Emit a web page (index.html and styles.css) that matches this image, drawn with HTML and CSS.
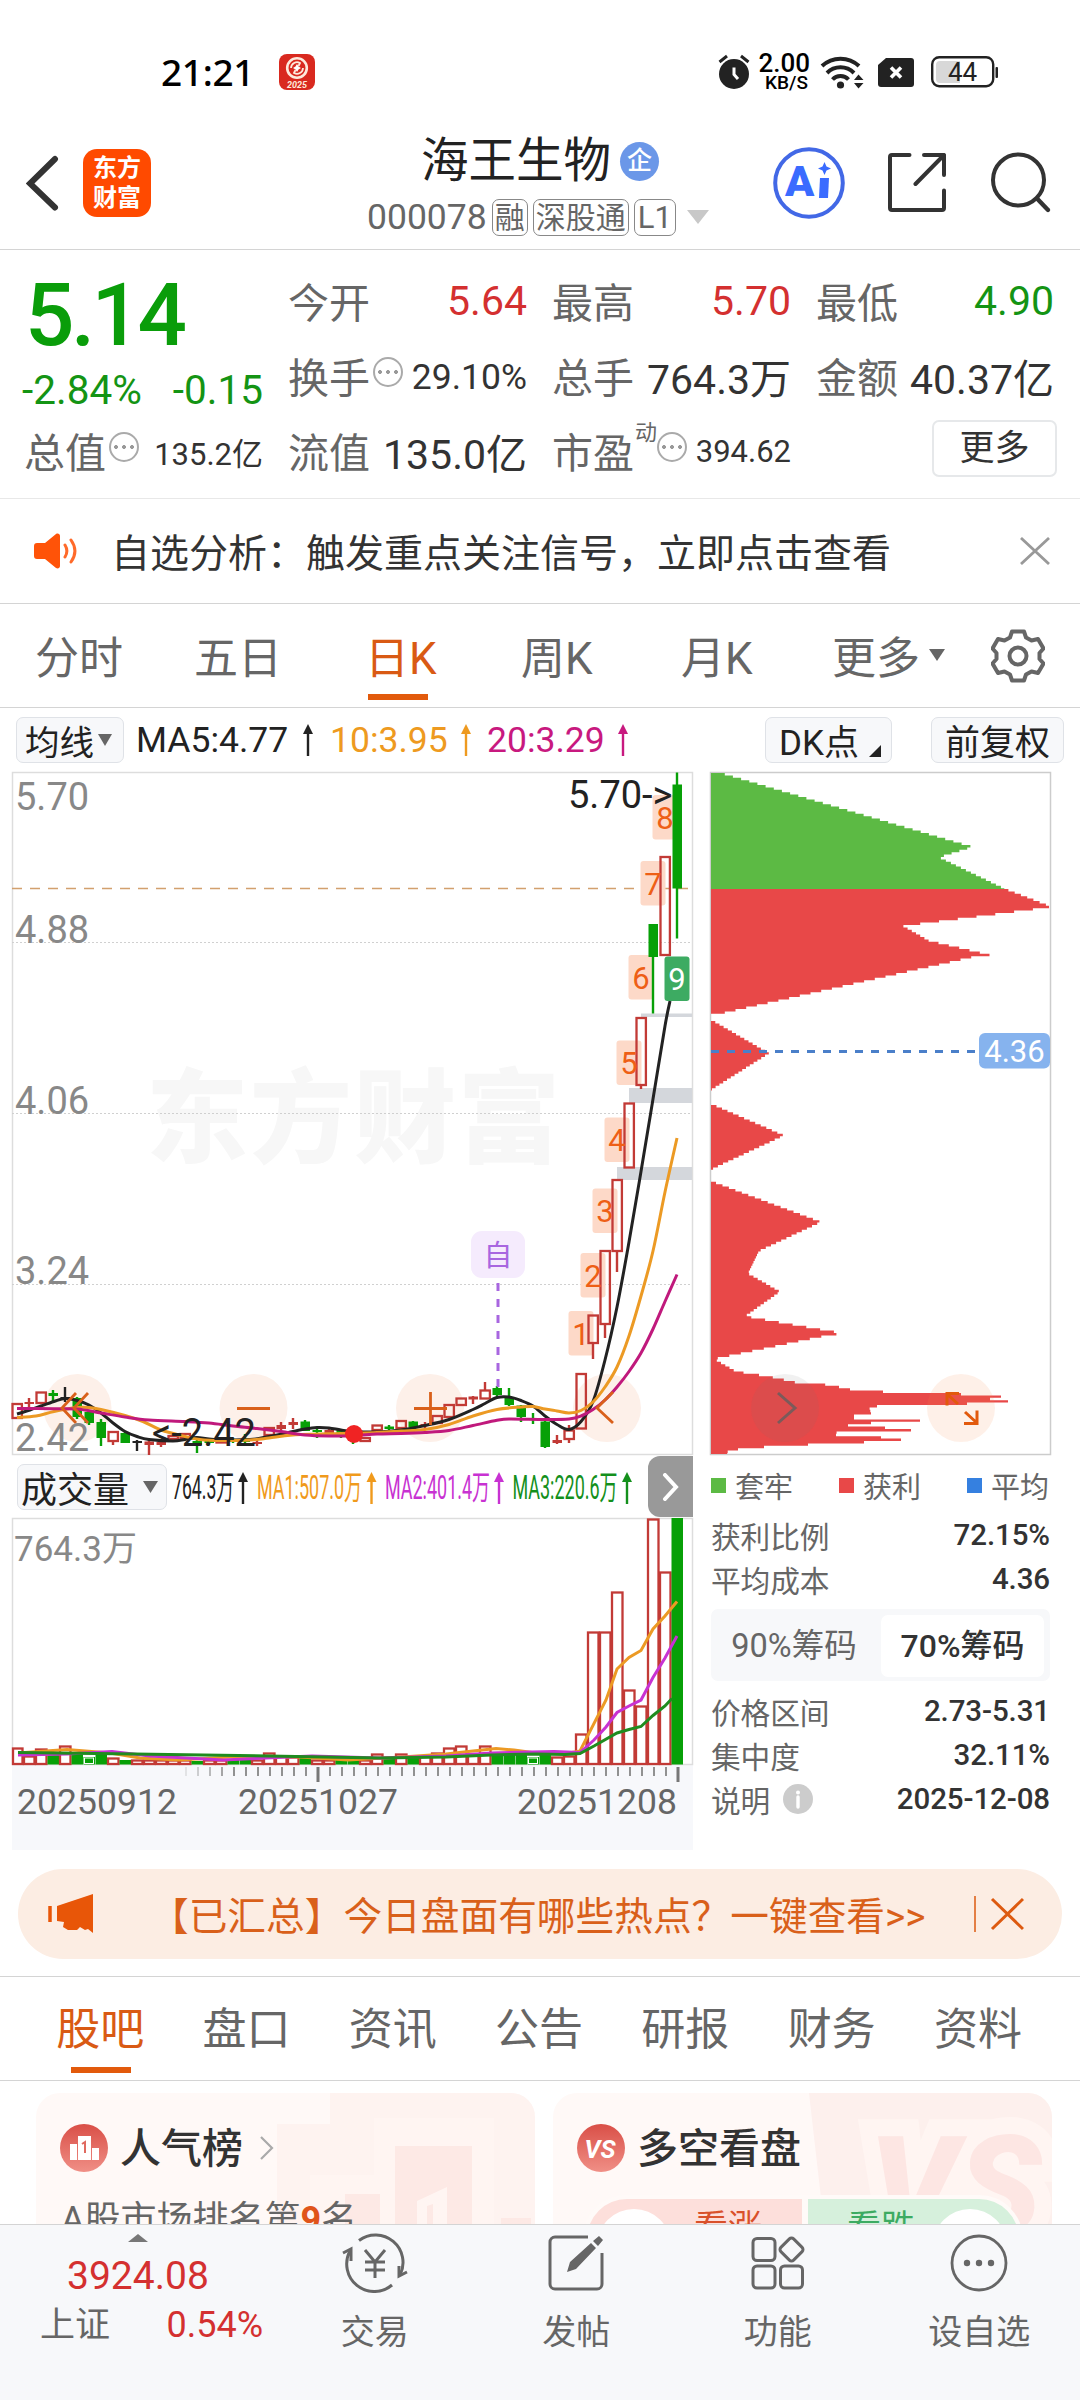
FILE: index.html
```html
<!DOCTYPE html>
<html lang="zh-CN">
<head>
<meta charset="utf-8">
<title>海王生物 000078</title>
<link rel="stylesheet" href="styles.css">
</head>
<body>
<div class="screen">
  <div class="status">
    <span class="clock">21:21</span>
    <svg class="app-dot" width="36" height="36" viewBox="0 0 36 36"><rect width="36" height="36" rx="8" fill="#d9291f"/><circle cx="18" cy="14" r="9.800" fill="none" stroke="#fde9dc" stroke-width="2.600"/><path d="M12 14a6 6 0 0 1 9-5l-1.500 3M24 14a6 6 0 0 1-9 5l1.500-3" fill="none" stroke="#fde9dc" stroke-width="1.800"/><path d="M18 10l1.500 2.500 2.500 1.500-2.500 1.500L18 18l-1.500-2.500L14 14l2.500-1.500z" fill="#fff"/><text x="18" y="34" class="dot-text">2025</text></svg>
    <svg class="alarm" width="32" height="36" viewBox="0 0 32 36"><circle cx="16" cy="20" r="15" fill="#222"/><path d="M1.500 8L9 2M30.500 8L23 2" stroke="#222" stroke-width="3"/><path d="M16 13.500v7l4 4.500" fill="none" stroke="#fff" stroke-width="3"/></svg>
    <span class="speed"><b>2.00</b><i>KB/S</i></span>
    <svg class="wifi" width="44" height="34" viewBox="0 0 44 34"><g fill="none" stroke="#222" stroke-width="4"><path d="M2 11a27 27 0 0 1 37 0"/><path d="M7 18a19 19 0 0 1 27 0"/><path d="M12.500 24.500a11 11 0 0 1 16 0"/></g><circle cx="20.500" cy="30" r="3.600" fill="#222"/><path d="M34 25l4.500-5.500 5 5.500zM34 28l4.500 5.500 5-5.500z" fill="#222"/></svg>
    <svg class="sim" width="36" height="29" viewBox="0 0 36 29"><path d="M8 0h25a3 3 0 0 1 3 3v23a3 3 0 0 1-3 3H3a3 3 0 0 1-3-3V7z" fill="#222"/><path d="M13 9.500l10 10M23 9.500l-10 10" stroke="#fff" stroke-width="3.600"/></svg>
    <svg class="battery" width="68" height="32" viewBox="0 0 68 32"><rect x="1.200" y="1.200" width="61" height="29" rx="7" fill="#fff" stroke="#222" stroke-width="2.400"/><path d="M9 5h20v22H9a4 4 0 0 1-4-4V9a4 4 0 0 1 4-4z" fill="#d8d8d8"/><rect x="64.500" y="11" width="2.500" height="11" rx="1" fill="#222"/><text x="31.500" y="25" class="bat-text">44</text></svg>
  </div>

  <header class="head">
    <div class="head-left">
      <svg width="34" height="56" viewBox="0 0 34 56"><path d="M29 4L4 28.500 29 52.500" fill="none" stroke="#333" stroke-width="6" stroke-linecap="round"/></svg>
      <div class="logo"><span>东方</span><span>财富</span></div>
    </div>
    <div class="head-mid">
      <div class="name">海王生物<span class="firm">企</span></div>
      <div class="code">000078<em>融</em><em>深股通</em><em class="lv">L1</em><svg width="22" height="14" viewBox="0 0 22 14"><path d="M0 0h22L11 14z" fill="#c8c8c8"/></svg></div>
    </div>
    <div class="head-right">
      <svg width="74" height="74" viewBox="0 0 74 74"><circle cx="37" cy="37" r="33.800" fill="#fff" stroke="#4268e6" stroke-width="4"/><text x="13" y="50" class="ai">A</text><path d="M48 32h9l-1 20h-9z" fill="#3a6bff"/><path d="M52.500 16l2 4.500 4.500 2-4.500 2-2 4.500-2-4.500-4.500-2 4.500-2z" fill="#3a6bff"/></svg>
      <svg class="share" width="58" height="60" viewBox="0 0 58 60"><path d="M21.500 2H4a2 2 0 0 0-2 2v51a2 2 0 0 0 2 2h50a2 2 0 0 0 2-2V37.500M36 2h20v20M56 2L27.500 31" fill="none" stroke="#333" stroke-width="4" stroke-linecap="round" stroke-linejoin="round"/></svg>
      <svg class="find" width="62" height="62" viewBox="0 0 62 62"><circle cx="28.500" cy="28" r="25.500" fill="none" stroke="#333" stroke-width="4"/><path d="M47 46.500L58 58" stroke="#333" stroke-width="4.400" stroke-linecap="round"/></svg>
    </div>
  </header>

  <section class="quote">
    <div class="price">5.14</div>
    <div class="change"><span>-2.84%</span><span>-0.15</span></div>
    <div class="cell c2 r1"><label>今开</label><b class="red">5.64</b></div>
    <div class="cell c3 r1"><label>最高</label><b class="red">5.70</b></div>
    <div class="cell c4 r1"><label>最低</label><b class="green">4.90</b></div>
    <div class="cell c2 r2"><label>换手<s></s></label><b class="mid">29.10%</b></div>
    <div class="cell c3 r2"><label>总手</label><b>764.3万</b></div>
    <div class="cell c4 r2"><label>金额</label><b>40.37亿</b></div>
    <div class="cell c1 r3"><label>总值<s></s></label><b class="small">135.2亿</b></div>
    <div class="cell c2 r3"><label>流值</label><b>135.0亿</b></div>
    <div class="cell c3 r3"><label>市盈<sup>动</sup><s class="near"></s></label><b class="small">394.62</b></div>
    <div class="cell c4 r3 end"><button class="more">更多</button></div>
  </section>

  <div class="notice">
    <svg width="44" height="36" viewBox="0 0 44 36"><path d="M3 10h8l11-9c2-1 4 0 4 2v30c0 2-2 3-4 2l-11-9H3c-2 0-3-1-3-3V13c0-2 1-3 3-3z" fill="#ff5308"/><path d="M31 12c2.500 4 2.500 8 0 12M37 7c5 7 5 15 0 22" fill="none" stroke="#ff6a2a" stroke-width="3" stroke-linecap="round"/></svg>
    <span>自选分析：触发重点关注信号，立即点击查看</span>
    <svg width="30" height="28" viewBox="0 0 30 28"><path d="M1 1l28 26M29 1L1 27" stroke="#999" stroke-width="2.800"/></svg>
  </div>

  <nav class="periods">
    <span>分时</span><span>五日</span><span class="on">日K</span><span>周K</span><span>月K</span><span>更多<svg width="16" height="12" viewBox="0 0 16 12"><path d="M0 0h16L8 12z" fill="#666"/></svg></span>
    <svg class="gear" width="54" height="54" viewBox="-27 -27 54 54"><path d="M-6 -24.500H6L8 -18.500 13.500 -15.500 20 -17 25.500 -7.500 21.500 -3V3L25.500 7.500 20 17 13.500 15.500 8 18.500 6 24.500H-6L-8 18.500 -13.500 15.500 -20 17 -25.500 7.500 -21.500 3V-3L-25.500 -7.500 -20 -17 -13.500 -15.500 -8 -18.500Z" fill="none" stroke="#666" stroke-width="4" stroke-linejoin="round"/><circle r="8.500" fill="none" stroke="#666" stroke-width="4"/></svg>
  </nav>

  <div class="tools">
    <span class="chip ma-chip">均线<svg width="14" height="12" viewBox="0 0 14 12"><path d="M0 0h14L7 12z" fill="#666"/></svg></span>
    <span class="ma m5">MA5:4.77<svg class="arrow" width="12" height="32" viewBox="-1 0 12 32"><use href="#up"/></svg></span>
    <span class="ma m10">10:3.95<svg class="arrow" width="12" height="32" viewBox="-1 0 12 32"><use href="#up"/></svg></span>
    <span class="ma m20">20:3.29<svg class="arrow" width="12" height="32" viewBox="-1 0 12 32"><use href="#up"/></svg></span>
    <span class="chip dk">DK点<svg width="12" height="12" viewBox="0 0 12 12"><path d="M12 0v12H0z" fill="#222"/></svg></span>
    <span class="chip fq">前复权</span>
  </div>

  <div class="board">
    <div class="left">
      <svg id="kline" width="698" height="686" viewBox="0 770 698 686">
        <defs><g id="up"><path d="M5 6v26" stroke="currentColor" stroke-width="2.400"/><path d="M0 10L5 0l5 10z" fill="currentColor"/></g></defs>
        <text class="water" x="146" y="1155" textLength="414">东方财富</text>
        <g class="frame"><rect x="12.500" y="772.500" width="680" height="682"/><path class="dots" d="M12 942.500H692M12 1113.500H692M12 1284.500H692"/></g>
        <path d="M641 1013.500H692V1017H641zM629 1088H692V1103H629zM617 1167H692V1180H617z" fill="#d4d7dc"/>
        <path class="last" d="M12 888.500H690"/>
        <g class="axis"><text x="15" y="810">5.70</text><text x="15" y="943">4.88</text><text x="15" y="1114">4.06</text><text x="15" y="1284">3.24</text></g>
        <g id="buttons" fill="#fdf0e9"><circle cx="77.500" cy="1408" r="34"/><circle cx="253.500" cy="1408" r="34"/><circle cx="430" cy="1408" r="34"/><circle cx="607" cy="1408" r="34"/></g>
        <g id="tags"></g>
        <g id="candles"></g>
        <g id="lines"></g>
        <circle cx="354" cy="1434" r="9" fill="#f02323"/>
        <path d="M76 1393l-14 15 14 15M88 1393l-14 15 14 15M237 1408.500h33M414 1408.500h33M430.500 1392v33M613 1392l-16 16 16 15" fill="none" stroke="#d9601a" stroke-width="2.800"/>
        <text class="axis" x="15" y="1451">2.42</text>
        <text class="mark" x="152" y="1446">&lt;-2.42</text><text class="mark" x="568" y="808">5.70-&gt;</text>
        <rect x="471" y="1231" width="54" height="47" rx="11" fill="#f5ebfd"/><text class="zi" x="498" y="1266">自</text>
        <path d="M498 1283V1388" stroke="#a866e0" stroke-width="3" stroke-dasharray="8 8"/>
        <rect x="664.500" y="956.500" width="25" height="44.500" rx="3" fill="#3dab62"/><text class="tag nine" x="677" y="990">9</text>
      </svg>
      <div class="vol-tools">
        <span class="chip vol-chip">成交量<svg width="15" height="12" viewBox="0 0 15 12"><path d="M0 0h15L7.500 12z" fill="#666"/></svg></span>
        <svg class="vol-text" width="470" height="46" viewBox="170 1463 470 46">
          <g fill="#222" color="#222"><text x="172" y="1498" textLength="62" lengthAdjust="spacingAndGlyphs">764.3万</text><use href="#up" x="238" y="1471"/></g>
          <g fill="#f09a1c" color="#f09a1c"><text x="257" y="1498" textLength="105" lengthAdjust="spacingAndGlyphs">MA1:507.0万</text><use href="#up" x="366.500" y="1471"/></g>
          <g fill="#c832d2" color="#c832d2"><text x="385" y="1498" textLength="105" lengthAdjust="spacingAndGlyphs">MA2:401.4万</text><use href="#up" x="494" y="1471"/></g>
          <g fill="#14901c" color="#14901c"><text x="512.500" y="1498" textLength="105" lengthAdjust="spacingAndGlyphs">MA3:220.6万</text><use href="#up" x="622" y="1471"/></g>
        </svg>
        <span class="handle"><svg width="18" height="28" viewBox="0 0 18 28"><path d="M3 2l11 12L3 26" fill="none" stroke="#fff" stroke-width="4" stroke-linecap="round"/></svg></span>
      </div>
      <svg id="volume" width="698" height="334" viewBox="0 1517 698 334">
        <rect x="12" y="1765" width="681" height="85" fill="#f7f8fb"/>
        <g class="frame"><rect x="12.500" y="1518.500" width="680" height="246"/></g>
        <text class="axis vlabel" x="14" y="1561">764.3万</text>
        <g id="bars"></g><g id="vlines"></g><g id="ticks"></g>
        <g class="dates"><text x="17" y="1814" textLength="160">20250912</text><text x="238" y="1814" textLength="160">20251027</text><text x="517" y="1814" textLength="160">20251208</text></g>
      </svg>
    </div>

    <div class="right">
      <svg id="chips" width="382" height="686" viewBox="698 770 382 686">
        <rect x="710.500" y="772.500" width="340" height="682" fill="none" stroke="#ccc" stroke-width="1.500"/>
        <g id="profile"></g>
        <path d="M711 1051.500H975" stroke="#4a7fc9" stroke-width="2.800" stroke-dasharray="8 8"/>
        <rect x="979" y="1033" width="71" height="35.500" rx="6" fill="#86b3ee"/><text class="avg" x="1014.500" y="1061.500">4.36</text>
        <circle cx="785" cy="1408" r="34" fill="#777" fill-opacity=".1"/><circle cx="961" cy="1408" r="34" fill="#fb8a4a" fill-opacity=".13"/>
        <path d="M778 1393l17 15-17 15" fill="none" stroke="#7b5a5a" stroke-width="3"/>
        <path d="M959 1393.500h-12v12M947 1394l11 10M965 1412l12 11M964 1423.500h13v-13" fill="none" stroke="#e2590c" stroke-width="3"/>
      </svg>
      <div class="legend"><span><i class="k-green"></i>套牢</span><span><i class="k-red"></i>获利</span><span><i class="k-blue"></i>平均</span></div>
      <div class="stat"><label>获利比例</label><b>72.15%</b></div>
      <div class="stat"><label>平均成本</label><b>4.36</b></div>
      <div class="switch"><span>90%筹码</span><span class="sel">70%筹码</span></div>
      <div class="stat"><label>价格区间</label><b>2.73-5.31</b></div>
      <div class="stat"><label>集中度</label><b>32.11%</b></div>
      <div class="stat"><label>说明<svg width="30" height="30" viewBox="0 0 30 30"><circle cx="15" cy="15" r="15" fill="#ccc"/><circle cx="15" cy="8.500" r="2" fill="#fff"/><path d="M15 13v10" stroke="#fff" stroke-width="3.400" stroke-linecap="round"/></svg></label><b>2025-12-08</b></div>
    </div>
  </div>

  <div class="banner">
    <svg width="46" height="40" viewBox="0 0 46 40"><path d="M2 12v16" stroke="#e85608" stroke-width="3.500"/><path d="M9 12L45 0v39l-5-4-3 1-5-3-3 3h-9l-5-3 1-5-7-1z" fill="#e85608"/></svg>
    <span>【已汇总】今日盘面有哪些热点？一键查看&gt;&gt;</span>
    <svg class="close" width="50" height="36" viewBox="0 0 50 36"><path d="M1 0v36" stroke="#dd5a10" stroke-width="1.500"/><path d="M18 3l31 30M49 3L18 33" stroke="#dd5a10" stroke-width="3"/></svg>
  </div>

  <nav class="tabs"><span class="on">股吧</span><span>盘口</span><span>资讯</span><span>公告</span><span>研报</span><span>财务</span><span>资料</span></nav>

  <div class="cards">
    <div class="card rank">
      <svg class="deco" width="260" height="131" viewBox="-30 0 260 131"><path d="M-28 31H25V0h205v131H-28z" fill="#fdf0ed" fill-opacity=".75"/><path d="M5 82h64V25h120v106H5z" fill="#fff5f2"/><path d="M90 53h77v78H90zM40 101h35v30H40zM196 125h30v6h-30z" fill="#fde9e5"/><path d="M112 108l30-14v37h-14v-20l-6 2v18h-10z" fill="#fff5f2"/></svg>
      <div class="card-title"><svg width="48" height="48" viewBox="0 0 48 48"><circle cx="24" cy="24" r="24" fill="url(#g)"/><path d="M10 20h7v16h-7zM18 12h13v24H18zM32 24h7v12h-7z" fill="#fff"/><path d="M22 20l3-2v11" stroke="#e06a60" stroke-width="2" fill="none"/><defs><linearGradient id="g" x2="0" y2="1"><stop stop-color="#d94f47"/><stop offset="1" stop-color="#f08f86"/></linearGradient></defs></svg><h3>人气榜</h3><svg class="go" width="15" height="24" viewBox="0 0 15 24"><path d="M2 1l11 11L2 23" fill="none" stroke="#aaa" stroke-width="2.200"/></svg></div>
      <p>A股市场排名第<b>9</b>名</p>
    </div>
    <div class="card duel">
      <svg class="deco" width="243" height="131" viewBox="0 0 243 131"><path d="M0 0h243v131H15z" fill="#fdf0ed"/><text x="60" y="142" class="vs-big">VS</text></svg>
      <div class="card-title"><svg width="48" height="48" viewBox="0 0 48 48"><circle cx="24" cy="24" r="24" fill="url(#g)"/><text x="23" y="34" class="vs" textLength="31" lengthAdjust="spacingAndGlyphs">VS</text></svg><h3>多空看盘</h3></div>
      <div class="poll"><div class="bull"><i></i>看涨</div><div class="bear">看跌<i></i></div></div>
    </div>
  </div>

  <footer class="dock">
    <div class="index"><svg width="20" height="8" viewBox="0 0 20 8"><path d="M0 8L10 0l10 8z" fill="#777"/></svg><b>3924.08</b><div><span>上证</span><em>0.54%</em></div></div>
    <div class="item"><svg width="68" height="60" viewBox="-34 -30 68 60"><g fill="none" stroke="#666" stroke-width="3"><path d="M-16 -22.500A27.500 27.500 0 0 1 25 12M17 22A27.500 27.500 0 0 1 -25 -12"/><path d="M-32 -10l8-4v12M32 9l-8 4V3"/><path d="M-10 -13L0 -1 10 -13M0 -1V15M-10 -1H10M-10 7H10"/></g></svg>交易</div>
    <div class="item"><svg width="68" height="60" viewBox="-34 -30 68 60"><path d="M12 -26H-21a5 5 0 0 0-5 5V21a5 5 0 0 0 5 5H21a5 5 0 0 0 5-5V-10" fill="none" stroke="#666" stroke-width="3"/><path d="M-9 9l3-10L15 -20l5 5L0 6zM17 -22l6-5 4 4-5 6z" fill="#666"/></svg>发帖</div>
    <div class="item"><svg width="68" height="60" viewBox="-34 -30 68 60"><g fill="none" stroke="#666" stroke-width="3"><rect x="-25" y="-24.500" width="22" height="22" rx="4"/><rect x="-25" y="3" width="22" height="22" rx="4"/><rect x="2.500" y="3" width="22" height="22" rx="4"/><rect x="4.500" y="-22.500" width="18" height="18" rx="3" transform="rotate(45 13.500 -13.500)"/></g></svg>功能</div>
    <div class="item"><svg width="68" height="60" viewBox="-34 -30 68 60"><circle r="27" fill="none" stroke="#666" stroke-width="2.800"/><circle cx="-12" r="3.200" fill="#666"/><circle r="3.200" fill="#666"/><circle cx="12" r="3.200" fill="#666"/></svg>设自选</div>
  </footer>
</div>
<script src="charts.js"></script>
</body>
</html>
```
FILE: styles.css
```css
* { box-sizing: border-box; }
body { margin: 0; background: #fff; color: #333; font-family: Roboto, "Noto Sans CJK SC", sans-serif; }
svg { display: block; flex: none; }
b, i, em, h3, s { font-weight: 400; font-style: normal; text-decoration: none; }
.screen { width: 1080px; height: 2400px; overflow: hidden; display: flex; flex-direction: column; background: #fff; }
.screen > * { flex: none; }

.status { height: 116px; padding: 28px 0 0 160px; display: flex; align-items: center; color: #000; }
.clock { width: 119px; font: 500 37px/44px "Noto Sans", sans-serif; padding-left: 1px; letter-spacing: -.3px; }
.dot-text { font: italic 700 9px Roboto, sans-serif; fill: #fde9dc; text-anchor: middle; }
.alarm { margin: 0 10px 0 403px; }
.speed { width: 50px; display: flex; flex-direction: column; align-items: flex-end; }
.speed b { font: 500 26px/22px Roboto, sans-serif; }
.speed i { font: 500 19px/18px Roboto, sans-serif; padding-right: 2px; }
.wifi { margin-left: 10px; }
.sim { margin-left: 14px; }
.battery { margin-left: 17px; }
.bat-text { font: 400 26px Roboto, sans-serif; text-anchor: middle; fill: #222; }

.head { height: 134px; display: grid; grid-template-columns: 367px 346px 1fr; align-items: center; border-bottom: 1.500px solid #d4d4d4; }
.head-left { display: flex; align-items: center; padding-left: 26px; gap: 23px; }
.logo { width: 68px; height: 68px; border-radius: 14px; background: #ff4a00; color: #fff; display: flex; flex-direction: column; justify-content: center; align-items: center; font-weight: 700; font-size: 24px; line-height: 30px; }
.head-mid { padding-top: 13px; }
.name { height: 56px; padding-left: 54px; display: flex; align-items: center; font-size: 47.500px; line-height: 56px; color: #222; }
.firm { width: 39px; height: 39px; margin-left: 9px; border-radius: 50%; background: #6b97e8; color: #fff; font-size: 25px; font-weight: 500; line-height: 38px; text-align: center; }
.code { height: 56px; display: flex; align-items: center; font-size: 35.500px; color: #666; white-space: nowrap; }
.code em { flex: none; height: 37px; border: 1.500px solid #888; border-radius: 7px; font-size: 30px; line-height: 35px; padding: 0 2px; margin-left: 5px; }
.code .lv { padding: 0 3px; font-size: 31px; }
.code svg { margin-left: 11px; }
.head-right { display: flex; align-items: center; padding-left: 59px; }
.share { margin-left: 42px; }
.find { margin-left: 44px; }
.ai { font: 900 43px Roboto, sans-serif; fill: #3a6bff; }

.quote { height: 249px; padding: 13px 0 0 25px; display: grid; grid-template-columns: 238px 238px 238px 237px; column-gap: 26px; grid-template-rows: repeat(3, 75px); border-bottom: 1.500px solid #e8e8e8; }
.price { grid-area: 1 / 1; padding-top: 6px; font-size: 87px; font-weight: 500; line-height: 92px; letter-spacing: -3.500px; color: #0a9d0a; }
.change { grid-area: 2 / 1; display: flex; justify-content: space-between; align-items: center; padding-top: 28px; margin: 0 0 0 -3px; font-size: 40.500px; line-height: 50px; color: #149414; }
.cell { display: flex; justify-content: space-between; align-items: center; font-size: 41px; }
.cell label { color: #666; display: flex; align-items: center; margin: -2px 0 0 -1px; }
.cell b { white-space: nowrap; }
.cell .mid { font-size: 35.500px; padding-top: 2px; }
.cell .small { font-size: 31px; padding-top: 2px; }
.cell sup { font-size: 22px; line-height: 24px; align-self: flex-start; margin: 1px 0 0 1px; }
.cell s { width: 30px; height: 30px; margin: -6px 0 0 3px; border: 2px solid #aaa; border-radius: 50%; background: radial-gradient(circle, #999 1.700px, transparent 2.200px) 1px 0 / 8px 26px repeat-x; background-clip: content-box; padding: 0 1px; }
.cell .near { margin-left: 0; }
.cell .red, .red { color: #d43030; }
.cell .green { color: #149414; }
.c1 { grid-column: 1; } .c2 { grid-column: 2; } .c3 { grid-column: 3; } .c4 { grid-column: 4; }
.r1 { grid-row: 1; } .r2 { grid-row: 2; } .r3 { grid-row: 3; }
.end { justify-content: flex-end; }
.more { width: 125px; height: 57px; margin: -4px -3px 0 0; padding: 0; background: #fff; border: 2px solid #e6e8ea; border-radius: 7px; font: 35px/50px Roboto, "Noto Sans CJK SC", sans-serif; color: #333; }

.notice { height: 105px; padding: 0 30px 0 34px; display: flex; align-items: center; font-size: 39px; border-bottom: 1.500px solid #d4d4d4; }
.notice span { flex: 1; margin: -2px 0 0 33px; }

.periods { height: 104px; padding-left: 35px; display: flex; align-items: center; font-size: 44px; color: #666; border-bottom: 1.500px solid #d4d4d4; }
.periods span { display: flex; align-items: center; height: 100%; padding-bottom: 2px; }
.periods span:nth-child(1) { width: 159px; }
.periods span:nth-child(2) { width: 171px; }
.periods span:nth-child(3) { width: 156px; }
.periods span:nth-child(4) { width: 160px; }
.periods span:nth-child(5) { width: 151px; }
.periods span:nth-child(6) { width: 159px; }
.periods span svg { margin-left: 9px; }
.periods .on { background: linear-gradient(#e25a0c, #e25a0c) 3px 90px / 60px 6px no-repeat; }
.on { color: #d95a14; }

.tools { height: 62px; padding: 1px 0 0 16px; display: flex; align-items: center; font-size: 35px; color: #222; }
.chip { height: 46px; display: flex; align-items: center; background: #f7f8fa; border: 1.500px solid #dfe2e7; border-radius: 7px; color: #222; }
.ma-chip { width: 108px; padding-left: 8px; font-size: 34.500px; gap: 4px; }
.ma { display: flex; align-items: center; }
.arrow { margin-left: 14px; }
.m5 { width: 194px; margin-left: 12px; font-size: 35.500px; }
.m10 { width: 157px; color: #ee9a20; font-size: 35.500px; }
.m20 { width: 278px; color: #c8197f; font-size: 35.500px; }
.m10 .arrow, .m20 .arrow { margin-left: 12px; }
.dk { width: 127px; padding-left: 13px; gap: 10px; }
.dk svg { margin-top: 22px; }
.fq { width: 133px; margin-left: 39px; justify-content: center; }

.board { display: grid; grid-template-columns: 698px 382px; height: 1081px; }
.frame { fill: none; stroke: #ddd; stroke-width: 1.500; }
.dots { stroke: #d0d0d0; stroke-width: 1; stroke-dasharray: 2 2; }
.water { font: 900 102px "Noto Sans CJK SC", sans-serif; fill: #f7f7f7; }
.last { stroke: #d2a06e; stroke-width: 1.500; stroke-dasharray: 10 8; }
.axis { font-size: 38px; fill: #888; }
.vlabel { font-size: 35px; }
.mark { font-size: 38px; fill: #222; }
.zi { font-size: 29px; fill: #a866e0; text-anchor: middle; }
.tag { font-size: 31px; fill: #ee5f16; text-anchor: middle; }
.nine { fill: #fff; }
.vol-tools { height: 61px; padding-left: 17px; display: flex; align-items: center; }
.vol-chip { width: 150px; padding-left: 3px; font-size: 36px; gap: 14px; }
.vol-text { margin-left: 3px; font-size: 33px; }
.handle { width: 45px; height: 61px; margin-left: 8px; border-radius: 12px 0 0 12px; background: #999; display: flex; align-items: center; justify-content: center; }
.dates { font-size: 35.500px; fill: #666; }

.avg { font-size: 31px; fill: #fff; text-anchor: middle; }
.legend { height: 56px; margin: 1px 31px 0 13px; display: flex; justify-content: space-between; align-items: center; font-size: 29px; color: #666; }
.legend span { display: flex; align-items: center; }
.legend i { width: 15px; height: 15px; margin-right: 9px; }
.k-green { background: #5cba44; } .k-red { background: #e84848; } .k-blue { background: #3580e0; }
.stat { height: 44px; margin: 0 30px 0 13px; display: flex; justify-content: space-between; align-items: center; font-size: 29.500px; letter-spacing: -.1px; color: #666; }
.stat label { display: flex; align-items: center; gap: 13px; font-size: 29.700px; }
.stat b { font-weight: 500; color: #333; }
.switch { height: 72px; margin: 8px 30px 8px 13px; padding: 6px; border-radius: 7px; background: #f7f8fa; display: grid; grid-template-columns: 164px 163px; font-size: 32.500px; line-height: 62px; text-align: center; color: #666; }
.switch span:first-child { padding-right: 10px; }
.switch .sel { background: #fff; border-radius: 7px; font-weight: 500; font-size: 32px; color: #333; }

.banner { height: 90px; margin: 18px 18px 17px; padding-left: 30px; border-radius: 45px; background: #fcede3; color: #d9601a; display: flex; align-items: center; font-size: 38.700px; }
.banner span { flex: none; width: 850px; padding: 0 0 3px 56px; white-space: nowrap; }
.banner .close { margin-left: 30px; }

.tabs { height: 105px; padding: 0 0 0 27px; border: solid #d4d4d4; border-width: 1.500px 0; display: grid; grid-template-columns: repeat(7, 146.300px); font-size: 44px; line-height: 107px; text-align: center; color: #666; }
.tabs .on { background: linear-gradient(#e25a0c, #e25a0c) 44px 90px / 60px 6px no-repeat; color: #d95a14; }

.cards { height: 143px; padding: 12px 28px 0 36px; display: grid; grid-template-columns: 499px 499px; gap: 18px; }
.card { position: relative; height: 131px; overflow: hidden; border-radius: 24px 24px 0 0; background: #fff9f7; padding: 0 0 0 24px; }
.deco { position: absolute; right: 0; top: 0; }
.vs { font: italic 700 26px Roboto, sans-serif; fill: #fff; text-anchor: middle; }
.vs-big { font: italic 900 138px Roboto, sans-serif; fill: #fde6e3; stroke: #fff5f2; stroke-width: 34; paint-order: stroke; }
.card-title { position: relative; display: flex; align-items: center; padding-top: 30px; height: 80px; }
.card h3 { margin: 2px 0 0 12px; font-size: 41px; font-weight: 500; line-height: 48px; color: #333; }
.go { margin-left: 16px; }
.card p { position: relative; margin: 23px 0 0 1px; font-size: 36px; line-height: 48px; color: #666; }
.card p b { color: #e0541a; font-weight: 700; }
.poll { position: relative; width: 440px; height: 80px; margin: 22px 0 0 6px; padding: 4px; border-radius: 44px 44px 0 0; background: #fffaf8; display: grid; grid-template-columns: 215px 211px; gap: 6px; font-size: 34px; line-height: 56px; }
.poll div { display: flex; height: 80px; }
.bull { border-radius: 40px 0 0 0; background: #fddfdb; color: #d9502a; }
.bear { border-radius: 0 40px 0 0; background: #d6f0dc; color: #3dab62; padding-left: 39px; }
.poll i { width: 74px; height: 74px; margin-top: 10px; border-radius: 50%; background: #fff; }
.bull i { margin-left: 10px; margin-right: 23px; }
.bear i { margin-left: 18px; }

.dock { position: relative; height: 176px; padding-left: 38px; border-top: 1.500px solid #d4d4d4; background: #f7f8fa; display: grid; grid-template-columns: 236px repeat(4, 201.500px); color: #666; }
.index > svg { margin: 9px 0 0 90px; }
.index b { display: block; margin: 9px 0 0 29px; font-size: 39px; line-height: 50px; color: #d43030; }
.index div { display: flex; justify-content: space-between; width: 225px; padding-left: 2px; font-size: 35px; line-height: 49px; }
.index em { color: #d43030; font-size: 36px; }
.item { display: flex; flex-direction: column; align-items: center; padding-top: 8px; font-size: 34px; line-height: 79px; }
```
FILE: charts.js
```js
const NS = 'http://www.w3.org/2000/svg';
const add = (id, tag, attrs, text) => {
  const el = document.createElementNS(NS, tag);
  for (const k in attrs) el.setAttribute(k, attrs[k]);
  if (text) el.textContent = text;
  document.getElementById(id).appendChild(el);
};
const X0 = 17, STEP = 12;
const RED = '#c23a36', GREEN = '#07a007', INK = '#222';

// Daily candles: type (r hollow, f filled red, g green, k flat), body top, body bottom, high, low.
const candles = [
  ['r',1404,1418],['f',1402,1404,1398,1407],['r',1392.5,1403],['g',1393,1396,1390,1402],['k',1397,1400,1387,1402],
  ['g',1398,1417,1397,1419],['g',1412,1423,1410,1425],['g',1422,1438,1419,1446],['r',1432,1441,1432,1445],['g',1433,1443,1431,1443],
  ['k',1441,1443,1440,1451],['f',1441.5,1445,1440,1455],['f',1442,1445,1441,1447],['r',1436,1439],['r',1434,1438],
  ['g',1441,1445,1439,1453],['g',1441,1443,1438,1444],['r',1440,1442.5],['g',1440,1442,1438,1443],['g',1440,1442,1434,1443],
  ['f',1442,1444,1440,1446],['r',1428,1435],['f',1425,1429,1422,1432],['f',1422,1425,1418,1429],['g',1421.5,1431,1420,1431],
  ['g',1430,1432,1429,1438],['f',1430,1433,1428,1434],['g',1430,1435,1430,1438],['g',1434,1438,1430,1444],['r',1438,1441],
  ['r',1425.5,1430],['g',1426.5,1429,1425,1430],['r',1421,1428],['g',1421.5,1427,1421,1427],['f',1424,1426,1422,1428],
  ['r',1416,1423],['r',1405,1417],['r',1398.5,1405],['f',1396.5,1399.5,1396,1404],['r',1390.5,1398.5,1382,1399],
  ['g',1388,1395,1386,1397],['g',1397.5,1405,1388,1406],['g',1405.5,1417,1405,1422],['g',1418,1419.5,1413,1424],['g',1421.5,1447,1421,1448],
  ['f',1440,1443,1435,1444],['r',1430.5,1439,1425,1443],['r',1374,1428.5,1374,1429],['r',1315.5,1343,1315,1359],['r',1251,1324,1251,1338],
  ['r',1180,1251,1180,1272],['r',1103.5,1167.5],['r',1018,1085,1018,1089],['g',924,957,924,1013.5],['r',857,955],['g',784.5,888.5,772.5,938.5]
];
candles.forEach(([t, top, bot, hi, lo], i) => {
  const x = X0 + STEP * i, c = t === 'g' ? GREEN : t === 'k' ? INK : RED;
  if (hi !== undefined) add('candles', 'path', { d: t === 'r' ? `M${x} ${hi}V${top}M${x} ${bot}V${lo}` : `M${x} ${hi}V${lo}`, stroke: c, 'stroke-width': 2.4 });
  if (t === 'r') add('candles', 'rect', { x: x - 4.5, y: top, width: 9.4, height: bot - top, fill: 'none', stroke: c, 'stroke-width': 2.3 });
  else add('candles', 'rect', { x: x - 4.5, y: top, width: 9.5, height: bot - top, fill: c });
});

// Nine-turn sequence tags.
[[568.5,1311,1],[580.5,1253,2],[592.5,1188.5,3],[604.5,1117.5,4],[616.5,1040.5,5],[628.5,955,6],[640.5,861,7],[652.5,795,8]].forEach(([x, y, n]) => {
  add('tags', 'rect', { x, y, width: 25, height: 44.5, rx: 3, fill: '#fdd9c8' });
  add('lines', 'text', { x: x + 12.5, y: y + 33.5, class: 'tag' }, String(n));
});

// Smooth line through a list of points.
const spline = (p) => {
  let d = `M${p[0][0]} ${p[0][1]}`;
  for (let i = 0; i < p.length - 1; i++) {
    const a = p[i - 1] || p[i], b = p[i], c = p[i + 1], e = p[i + 2] || c;
    d += `C${b[0] + (c[0] - a[0]) / 6} ${b[1] + (c[1] - a[1]) / 6} ${c[0] - (e[0] - b[0]) / 6} ${c[1] - (e[1] - b[1]) / 6} ${c[0]} ${c[1]}`;
  }
  return d;
};
const line = (id, color, pts, w) => add(id, 'path', { d: spline(pts), fill: 'none', stroke: color, 'stroke-width': w });
line('lines', '#222', [[17,1414],[30,1410],[41,1406],[54,1401.5],[65,1398.5],[77,1400.5],[89,1405],[101,1413],[113,1423],[125,1431.5],[137,1436.5],[149,1439.5],[173,1441],[185,1439.5],[197,1437.5],[214,1439.5],[250,1439.5],[269,1436.5],[293,1431.5],[305,1429],[317,1427.5],[329,1428],[341,1430],[354,1431.5],[377,1432],[401,1430],[425,1425.5],[449,1419.5],[473,1409.5],[485,1403.5],[497,1397.5],[509,1397],[521,1400.5],[533,1406],[545,1416],[557,1424.5],[569,1429.5],[581,1421.5],[593,1401.5],[605,1360],[617,1307],[629,1242],[641,1171.5],[653,1099],[665,1026],[670,1001]], 3);
line('lines', '#ec9a24', [[17,1417.5],[36,1416],[54,1411.5],[77,1407.5],[89,1407.5],[101,1409.5],[125,1415.5],[143,1421.5],[161,1430],[185,1436.5],[200,1439.5],[221,1440.5],[250,1440],[269,1438],[293,1435],[341,1433.5],[377,1432.5],[401,1431],[425,1429.5],[449,1424.5],[473,1416],[497,1409.5],[521,1407],[533,1406.5],[545,1409],[557,1411],[569,1413],[581,1410.5],[593,1402],[605,1387],[617,1367],[629,1336],[641,1296],[653,1251],[665,1192],[677,1138]], 3);
line('lines', '#c0197c', [[17,1408.5],[54,1408.7],[77,1409],[101,1413],[125,1417],[149,1420],[185,1421.5],[209,1423],[233,1426],[257,1428.5],[281,1431.5],[305,1435],[329,1436],[354,1435.7],[377,1434],[401,1433.5],[425,1432.5],[449,1430.5],[473,1425.5],[497,1420.3],[509,1419],[545,1419.5],[569,1419],[581,1416],[593,1409.5],[605,1400],[617,1387],[629,1371.5],[641,1353],[653,1329],[665,1301.5],[677,1274.5]], 3);

// Volume columns: top edge per day; g marks a falling day, h a hollow-topped one.
const vol = '1748r 1756r 1749r 1752g 1746r 1753g 1757h 1753g 1758r 1760g 1760r 1760r 1760r 1760r 1760r 1761g 1760r 1760r 1760g 1760g 1760r 1753r 1756r 1757r 1758g 1760r 1760r 1760g 1760g 1760r 1754r 1758g 1754r 1758g 1756r 1753r 1748r 1746r 1754r 1746r 1753g 1755g 1755g 1757h 1754g 1757r 1756r 1734r 1632r 1632r 1592r 1690r 1706r 1519r 1572r 1518g'.split(' ');
vol.forEach((s, i) => {
  const y = parseInt(s), t = s.slice(-1), x = X0 + STEP * i;
  const left = i === 0 ? x - 4 : x - 5;
  add('bars', 'rect', t === 'r'
    ? { x: left, y: y + .5, width: x + 5.5 - left, height: 1763.5 - y, fill: '#fff', stroke: RED, 'stroke-width': 2.3 }
    : { x: x - 5.5, y, width: 11.5, height: 1764.5 - y, fill: GREEN });
  if (t === 'h') add('bars', 'rect', { x: x - 4.5, y: y + 1, width: 9, height: 5.5, fill: 'none', stroke: '#fff', 'stroke-width': 1 });
  if (i >= 14) {
    const major = i === 25 || i === 55;
    add('ticks', 'path', { d: `M${x + 1} 1767V${major ? 1782 : 1776}`, stroke: '#777', 'stroke-width': major ? 3 : 1.6, opacity: Math.min(1, (i - 13) / 5) });
  }
});
const vline = (c, pts) => add('vlines', 'polyline', { points: pts.map(p => p.join(',')).join(' '), fill: 'none', stroke: c, 'stroke-width': 3 });
vline('#ec9a24', [[18,1753],[67,1749.5],[110,1753],[140,1758],[179,1760],[230,1757],[268,1756.5],[300,1757],[348,1760],[402,1757],[446,1754],[473,1751],[496,1748.5],[514,1750],[536,1753],[569,1753],[580,1751],[606,1700],[617,1669],[629,1657.5],[641,1650.5],[653,1629],[665,1616],[677,1601.5]]);
vline('#c832d2', [[18,1755],[67,1754],[112,1751.5],[150,1756],[223,1760],[312,1756],[380,1758],[446,1756],[491,1753],[554,1751.5],[580,1752.5],[594,1740],[606,1727],[617,1712.5],[629,1706],[641,1700],[653,1677.5],[665,1658],[677,1636]]);
vline('#1f8c1f', [[18,1752.5],[134,1754],[268,1756],[380,1758],[446,1757],[491,1755],[536,1754],[565,1754.5],[580,1753.5],[594,1746],[617,1733],[629,1729.5],[641,1726.5],[653,1715.5],[665,1706],[672,1698.5]]);

// Cost distribution: [y, bar length], sampled into thin rows.
const shape = [[772.5,8],[845.4,256],[846.8,262],[857.3,228],[888.5,293],[905.8,338],[908,338],[909,325],[926,192],[940.8,218],[953.8,274],[955.4,280],[957,262],[1013,12],[1015,0],[1021,0],[1022,4],[1053.3,58],[1088,3],[1090,0],[1105,0],[1106,5],[1135.5,73],[1168,3],[1170,0],[1182,0],[1183,5],[1222,110],[1251,48],[1273.5,37],[1291.7,69],[1316.3,34],[1332,124],[1333.6,131],[1335,118],[1359,3],[1371.5,25],[1374,42],[1377,60],[1384,92],[1385,129],[1389,127],[1390.5,172],[1392,172],[1392.2,250],[1394.3,250],[1394.5,290],[1396.8,290],[1397,279],[1399,279],[1399.2,297],[1401.8,297],[1402,256],[1404,256],[1404.2,166],[1406.5,166],[1406.7,158],[1413.5,160],[1413.8,143],[1418.5,143],[1418.8,209],[1421,209],[1421.2,160],[1423,160],[1423.2,137],[1425.5,137],[1425.7,174],[1428,174],[1428.2,200],[1430.5,200],[1430.7,126],[1435,125],[1435.2,170],[1437.5,170],[1437.7,190],[1440.2,190],[1440.4,153],[1442.5,153],[1442.7,97],[1445,97],[1445.2,53],[1447.5,53],[1447.7,27],[1450.5,27],[1450.7,17],[1454,16]];
const lenAt = (y) => {
  for (let i = 1; i < shape.length; i++) {
    const [y0, a] = shape[i - 1], [y1, b] = shape[i];
    if (y <= y1) return a + (b - a) * (y - y0) / (y1 - y0);
  }
  return 16;
};
const profile = (from, to, color) => {
  let d = `M711 ${from}`;
  for (let y = from; y < to; y += 2.4) {
    const e = Math.min(y + 2.4, to), w = 711 + lenAt((y + e) / 2);
    d += `H${w.toFixed(1)}V${e.toFixed(1)}`;
  }
  add('profile', 'path', { d: d + 'H711Z', fill: color });
};
profile(773, 889, '#5cba44');
profile(889, 1454, '#e84848');
```
